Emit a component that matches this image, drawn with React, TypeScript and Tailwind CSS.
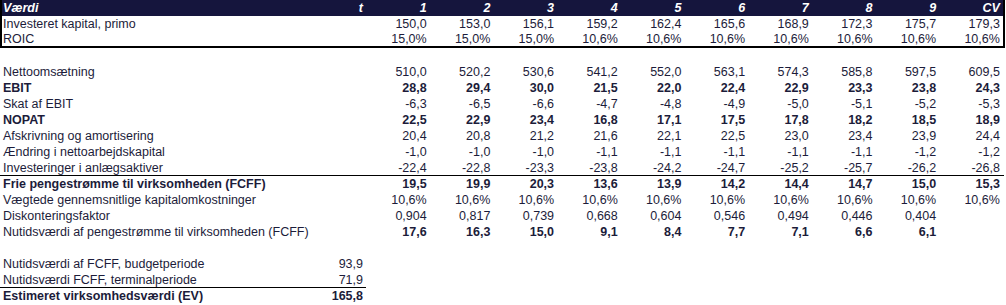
const boxCols = "grid grid-cols-[303px_61px_repeat(10,63.7px)] items-center";
const flowCols = "grid grid-cols-[305px_61px_repeat(10,63.7px)] items-center";

type RowProps = {
  label?: string;
  t?: string;
  values?: string[];
  bold?: boolean;
  boldValues?: boolean;
  inBox?: boolean;
  h?: string;
};

function Row({ label = "", t = "", values = [], bold, boldValues, inBox, h = "h-4" }: RowProps) {
  const cells = [...values];
  while (cells.length < 10) cells.push("");
  const valueWeight = bold || boldValues ? "font-bold" : "";
  return (
    <div className={`${inBox ? boxCols : flowCols} ${h}`}>
      <div className={`${inBox ? "pl-[1px]" : "pl-[3px]"} whitespace-nowrap ${bold ? "font-bold" : ""}`}>{label}</div>
      <div className={`pr-[3px] text-right ${valueWeight}`}>{t}</div>
      {cells.map((v, i) => (
        <div key={i} className={`pr-[3px] text-right ${valueWeight}`}>
          {v}
        </div>
      ))}
    </div>
  );
}

const heads = ["1", "2", "3", "4", "5", "6", "7", "8", "9", "CV"];

const ops: { label: string; values: string[]; bold?: boolean }[] = [
  { label: "Nettoomsætning", values: ["510,0", "520,2", "530,6", "541,2", "552,0", "563,1", "574,3", "585,8", "597,5", "609,5"] },
  { label: "EBIT", bold: true, values: ["28,8", "29,4", "30,0", "21,5", "22,0", "22,4", "22,9", "23,3", "23,8", "24,3"] },
  { label: "Skat af EBIT", values: ["-6,3", "-6,5", "-6,6", "-4,7", "-4,8", "-4,9", "-5,0", "-5,1", "-5,2", "-5,3"] },
  { label: "NOPAT", bold: true, values: ["22,5", "22,9", "23,4", "16,8", "17,1", "17,5", "17,8", "18,2", "18,5", "18,9"] },
  { label: "Afskrivning og amortisering", values: ["20,4", "20,8", "21,2", "21,6", "22,1", "22,5", "23,0", "23,4", "23,9", "24,4"] },
  { label: "Ændring i nettoarbejdskapital", values: ["-1,0", "-1,0", "-1,0", "-1,1", "-1,1", "-1,1", "-1,1", "-1,1", "-1,2", "-1,2"] },
];

export default function App() {
  return (
    <div className="w-[1006px] h-[305px] bg-white text-[#1c1c3a] text-[12.5px] leading-4 font-['Liberation_Sans',Arial,sans-serif] overflow-hidden">
      <div className="w-[1005px] h-12 border-l-2 border-r-2 border-b-2 border-black">
        <div className={`${boxCols} h-4 bg-[#15153d] text-white font-bold italic`}>
          <div className="pl-[1px]">Værdi</div>
          <div className="pr-[3px] text-right">t</div>
          {heads.map((h) => (
            <div key={h} className="pr-[3px] text-right">
              {h}
            </div>
          ))}
        </div>
        <Row inBox h="h-[15px]" label="Investeret kapital, primo" values={["150,0", "153,0", "156,1", "159,2", "162,4", "165,6", "168,9", "172,3", "175,7", "179,3"]} />
        <Row inBox h="h-[15px]" label="ROIC" values={["15,0%", "15,0%", "15,0%", "10,6%", "10,6%", "10,6%", "10,6%", "10,6%", "10,6%", "10,6%"]} />
      </div>

      <div className="h-4" />

      {ops.map((r) => (
        <Row key={r.label} label={r.label} values={r.values} bold={r.bold} />
      ))}
      <div className="w-[1004px] h-4 border-b border-black">
        <Row h="h-[15px]" label="Investeringer i anlægsaktiver" values={["-22,4", "-22,8", "-23,3", "-23,8", "-24,2", "-24,7", "-25,2", "-25,7", "-26,2", "-26,8"]} />
      </div>
      <Row bold label="Frie pengestrømme til virksomheden (FCFF)" values={["19,5", "19,9", "20,3", "13,6", "13,9", "14,2", "14,4", "14,7", "15,0", "15,3"]} />
      <Row label="Vægtede gennemsnitlige kapitalomkostninger" values={Array(10).fill("10,6%")} />
      <Row label="Diskonteringsfaktor" values={["0,904", "0,817", "0,739", "0,668", "0,604", "0,546", "0,494", "0,446", "0,404"]} />
      <Row boldValues label="Nutidsværdi af pengestrømme til virksomheden (FCFF)" values={["17,6", "16,3", "15,0", "9,1", "8,4", "7,7", "7,1", "6,6", "6,1"]} />

      <div className="h-4" />

      <Row label="Nutidsværdi af FCFF, budgetperiode" t="93,9" />
      <div className="w-[366px] h-4 border-b border-black">
        <Row h="h-[15px]" label="Nutidsværdi FCFF, terminalperiode" t="71,9" />
      </div>
      <Row label="Estimeret virksomhedsværdi (EV)" t="165,8" bold />
    </div>
  );
}
